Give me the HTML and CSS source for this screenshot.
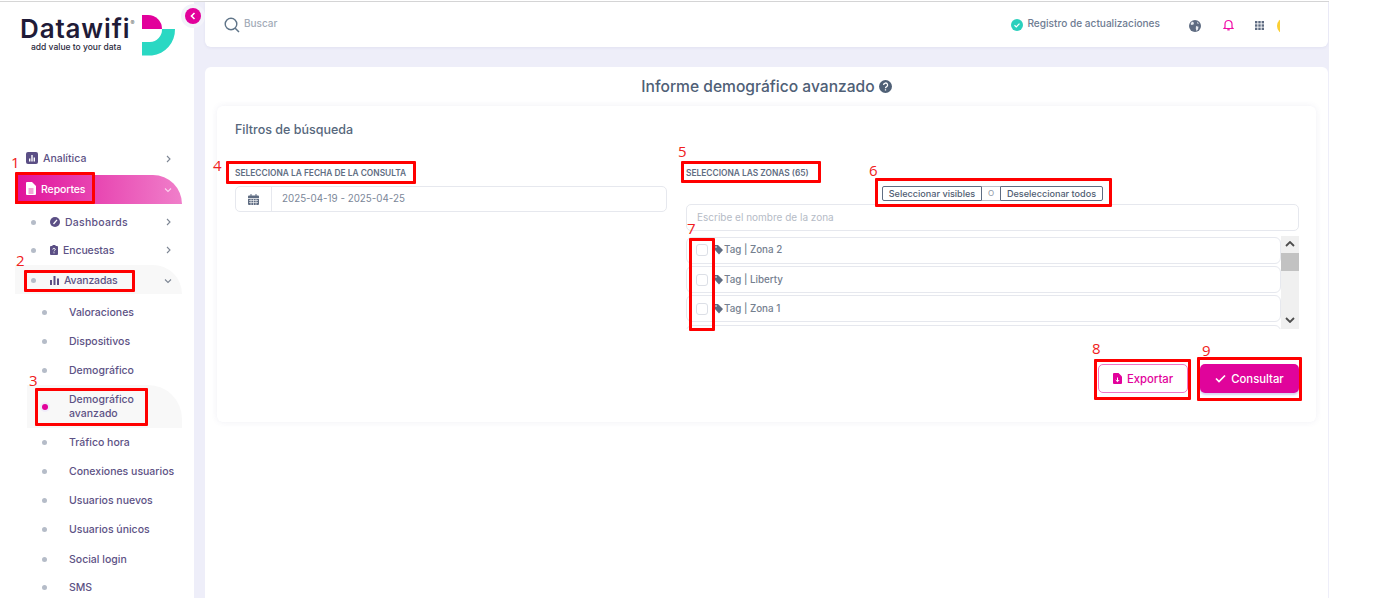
FILE: index.html
```html
<!DOCTYPE html>
<html lang="es">
<head>
<meta charset="utf-8">
<title>Informe demográfico avanzado</title>
<link rel="stylesheet" href="styles.css">
</head>
<body>
<div class="app">
  <aside class="sidebar">
    <div class="logo">
      <div class="logo-text">
        <div class="logo-name">Datawifi<sup class="logo-reg">®</sup></div>
        <div class="logo-tag">add value to your data</div>
      </div>
      <svg class="logo-mark" width="34" height="41" viewBox="0 0 34 41">
        <path d="M0 0h6a14 14 0 0 1 14 14H0z" fill="#e2019b"/>
        <path d="M20 14h13a26 26 0 0 1-23 26.500H0V27h8a12.500 12.500 0 0 0 12-13z" fill="#2ad8c3"/>
      </svg>
    </div>
    <nav class="nav">
      <a class="row l1 r-analitica">
        <svg class="ic ic-up" width="12" height="12" viewBox="0 0 12 12"><rect width="12" height="12" rx="2" fill="#5b4f85"/><path d="M3.700 9.500V6.500M6 9.500V3M8.300 9.500V5.500" stroke="#fff" stroke-width="1.400"/></svg>
        <span class="txt">Analítica</span>
        <svg class="chev" width="6" height="8" viewBox="0 0 6 8"><path d="M1 1l3 3-3 3" fill="none" stroke="#7d8694" stroke-width="1.100"/></svg>
      </a>
      <a class="row l1 r-reportes">
        <svg class="ic ic-up" width="10" height="13" viewBox="0 0 10 13"><path d="M1 0h5l4 4v8a1 1 0 0 1-1 1H1a1 1 0 0 1-1-1V1a1 1 0 0 1 1-1z" fill="#fff"/><path d="M2.500 7h5M2.500 9h5M2.500 11h5" stroke="#e64fb2"/></svg>
        <span class="txt">Reportes</span>
        <svg class="chev" width="8" height="6" viewBox="0 0 8 6"><path d="M1 1.500l3 3 3-3" fill="none" stroke="#fbd5ee" stroke-width="1.100"/></svg>
      </a>
      <a class="row l2 r-dash">
        <i class="dot"></i>
        <svg class="ic2" width="10" height="10" viewBox="0 0 10 10"><circle cx="5" cy="5" r="5" fill="#5b4f85"/><path d="M3.500 7L7 2.800" stroke="#fff" stroke-width="1.300"/></svg>
        <span class="txt">Dashboards</span>
        <svg class="chev" width="6" height="8" viewBox="0 0 6 8"><path d="M1 1l3 3-3 3" fill="none" stroke="#7d8694" stroke-width="1.100"/></svg>
      </a>
      <a class="row l2 r-enc">
        <i class="dot"></i>
        <svg class="ic2 ic-narrow" width="8" height="10" viewBox="0 0 8 10"><path d="M1 1h1.500V0h3v1H7a1 1 0 0 1 1 1v7a1 1 0 0 1-1 1H1a1 1 0 0 1-1-1V2a1 1 0 0 1 1-1z" fill="#5b4f85"/><path d="M2.800 4.500a1.200 1.200 0 1 1 1.700 1.100L4 6.300M4 7.300v1" stroke="#fff" fill="none"/></svg>
        <span class="txt">Encuestas</span>
        <svg class="chev" width="6" height="8" viewBox="0 0 6 8"><path d="M1 1l3 3-3 3" fill="none" stroke="#7d8694" stroke-width="1.100"/></svg>
      </a>
      <a class="row l2 r-ava">
        <i class="dot"></i>
        <svg class="ic2" width="9" height="9" viewBox="0 0 9 9"><path d="M0 4h2v5H0zM3.500 0h2v9h-2zM7 2.500h2V9H7z" fill="#5b4f85"/></svg>
        <span class="txt">Avanzadas</span>
        <svg class="chev" width="8" height="6" viewBox="0 0 8 6"><path d="M1 1.500l3 3 3-3" fill="none" stroke="#7d8694" stroke-width="1.100"/></svg>
      </a>
      <a class="row l3"><i class="dot"></i><span class="txt">Valoraciones</span></a>
      <a class="row l3"><i class="dot"></i><span class="txt">Dispositivos</span></a>
      <a class="row l3"><i class="dot"></i><span class="txt">Demográfico</span></a>
      <a class="row l3 r-active"><i class="dot dot-on"></i><span class="txt">Demográfico avanzado</span></a>
      <a class="row l3"><i class="dot"></i><span class="txt">Tráfico hora</span></a>
      <a class="row l3"><i class="dot"></i><span class="txt">Conexiones usuarios</span></a>
      <a class="row l3"><i class="dot"></i><span class="txt">Usuarios nuevos</span></a>
      <a class="row l3"><i class="dot"></i><span class="txt">Usuarios únicos</span></a>
      <a class="row l3 r-social"><i class="dot"></i><span class="txt">Social login</span></a>
      <a class="row l3"><i class="dot"></i><span class="txt">SMS</span></a>
    </nav>
  </aside>

  <div class="content">
    <header class="topbar">
      <svg width="16" height="16" viewBox="0 0 16 16"><circle cx="7" cy="7" r="5.800" fill="none" stroke="#5f7488" stroke-width="1.400"/><path d="M11.200 11.200L15 15" stroke="#5f7488" stroke-width="1.500"/></svg>
      <span class="search">Buscar</span>
      <svg class="tick" width="12" height="12" viewBox="0 0 12 12"><circle cx="6" cy="6" r="6" fill="#2ad0bd"/><path d="M3.500 6.200l1.800 1.700 3.200-3.300" fill="none" stroke="#fff" stroke-width="1.200"/></svg>
      <span class="updates">Registro de actualizaciones</span>
      <svg class="globe" width="12" height="12" viewBox="0 0 12 12"><circle cx="6" cy="6" r="6" fill="#5f6c82"/><path d="M3 1.500l2 1.200-.5 1.800-2 .5-1-1zM7 6l2.500.7L9 9.500 7.500 11 6.800 8.500zM8 1.500l2 2-1.500.3z" fill="#e8ebf0"/></svg>
      <svg class="bell" width="11" height="12" viewBox="0 0 11 12"><path d="M2 8.500V5a3.500 3.500 0 0 1 7 0v3.500l1 1H1z" fill="none" stroke="#f010a8" stroke-width="1.200"/><path d="M4.300 10.800h2.400" stroke="#f010a8" stroke-width="1.300"/></svg>
      <svg class="apps" width="9" height="9" viewBox="0 0 9 9" fill="#5f6c82"><rect width="2.400" height="2.400"/><rect x="3.300" width="2.400" height="2.400"/><rect x="6.600" width="2.400" height="2.400"/><rect y="3.300" width="2.400" height="2.400"/><rect x="3.300" y="3.300" width="2.400" height="2.400"/><rect x="6.600" y="3.300" width="2.400" height="2.400"/><rect y="6.600" width="2.400" height="2.400"/><rect x="3.300" y="6.600" width="2.400" height="2.400"/><rect x="6.600" y="6.600" width="2.400" height="2.400"/></svg>
      <span class="avatar-clip"><i class="avatar"></i></span>
    </header>

    <main class="page">
      <h1 class="page-title">Informe demográfico avanzado
        <svg class="help" width="13" height="13" viewBox="0 0 13 13"><circle cx="6.500" cy="6.500" r="6.500" fill="#4f6076"/><path d="M4.600 5a2 2 0 1 1 2.900 1.800c-.7.400-1 .7-1 1.400M6.500 9.300v1.300" fill="none" stroke="#fff" stroke-width="1.300"/></svg>
      </h1>
      <section class="card">
        <h2 class="card-title">Filtros de búsqueda</h2>
        <div class="cols">
          <div class="col-date">
            <label class="lbl">SELECCIONA LA FECHA DE LA CONSULTA</label>
            <div class="date">
              <span class="date-ic"><svg width="11" height="11" viewBox="0 0 11 11"><path d="M1 1.500h1.500V0h1v1.500h4V0h1v1.500H10a1 1 0 0 1 1 1V4H0V2.500a1 1 0 0 1 1-1zM0 4.700h11V10a1 1 0 0 1-1 1H1a1 1 0 0 1-1-1z" fill="#5f6c82"/><path d="M1 6.500h9M1 8.500h9M3 5v6M5.500 5v6M8 5v6" stroke="#fff" stroke-width=".6"/></svg></span>
              <span class="date-val">2025-04-19 - 2025-04-25</span>
            </div>
          </div>
          <div class="col-zones">
            <label class="lbl">SELECCIONA LAS ZONAS (65)</label>
            <div class="seg">
              <button class="seg-btn seg-a">Seleccionar visibles</button>
              <span class="seg-o">O</span>
              <button class="seg-btn seg-b">Deseleccionar todos</button>
            </div>
            <div class="zone-search">Escribe el nombre de la zona</div>
            <div class="list">
              <div class="items">
                <div class="item"><i class="cb"></i><svg class="tag" width="10" height="10" viewBox="0 0 10 10"><path d="M0 0h4l5 5-4 4.500L0 4z" fill="#5f6c82"/><circle cx="2" cy="2" r=".8" fill="#fff"/></svg><span>Tag | Zona 2</span></div>
                <div class="item"><i class="cb"></i><svg class="tag" width="10" height="10" viewBox="0 0 10 10"><path d="M0 0h4l5 5-4 4.500L0 4z" fill="#5f6c82"/><circle cx="2" cy="2" r=".8" fill="#fff"/></svg><span>Tag | Liberty</span></div>
                <div class="item"><i class="cb"></i><svg class="tag" width="10" height="10" viewBox="0 0 10 10"><path d="M0 0h4l5 5-4 4.500L0 4z" fill="#5f6c82"/><circle cx="2" cy="2" r=".8" fill="#fff"/></svg><span>Tag | Zona 1</span></div>
                <div class="item"></div>
              </div>
              <div class="scroll">
                <svg width="10" height="6" viewBox="0 0 10 6"><path d="M1 5l4-4 4 4" fill="none" stroke="#4d4d4d" stroke-width="1.800"/></svg>
                <i class="thumb"></i>
                <svg class="sc-down" width="10" height="6" viewBox="0 0 10 6"><path d="M1 1l4 4 4-4" fill="none" stroke="#4d4d4d" stroke-width="1.800"/></svg>
              </div>
            </div>
            <div class="actions">
              <button class="btn btn-out"><svg width="9" height="11" viewBox="0 0 9 11"><path d="M1 0h4.500L9 3.500V10a1 1 0 0 1-1 1H1a1 1 0 0 1-1-1V1a1 1 0 0 1 1-1z" fill="#e2019b"/><path d="M4.500 4.500v4M2.800 7l1.700 1.700L6.200 7" fill="none" stroke="#fff"/></svg>Exportar</button>
              <button class="btn btn-fill"><svg width="11" height="9" viewBox="0 0 11 9"><path d="M1 4.500l3 3 6-6" fill="none" stroke="#fff" stroke-width="1.700"/></svg>Consultar</button>
            </div>
          </div>
        </div>
      </section>
    </main>
  </div>

  <span class="collapse"><svg width="6" height="8" viewBox="0 0 6 8"><path d="M4.500 1L1.500 4l3 3" fill="none" stroke="#fff" stroke-width="1.600"/></svg></span>

  <i class="mark m1"></i><b class="num n1">1</b>
  <i class="mark m2"></i><b class="num n2">2</b>
  <i class="mark m3"></i><b class="num n3">3</b>
  <i class="mark m4"></i><b class="num n4">4</b>
  <i class="mark m5"></i><b class="num n5">5</b>
  <i class="mark m6"></i><b class="num n6">6</b>
  <i class="mark m7"></i><b class="num n7">7</b>
  <i class="mark m8"></i><b class="num n8">8</b>
  <i class="mark m9"></i><b class="num n9">9</b>
</div>
</body>
</html>
```
FILE: styles.css
```css
* { box-sizing: border-box; }
html, body { margin: 0; padding: 0; background: #fff; height: 598px; overflow: hidden; }
body { font-family: Inter, "Open Sans", sans-serif; color: #5e6b80; }
i { display: block; }

.app { position: relative; display: flex; width: 1329px; height: 598px; overflow: hidden; background: #eeeef9; border-top: 1px solid #fff; box-shadow: inset 0 1px 0 #d6d6d6; }

/* sidebar */
.sidebar { flex: 0 0 194px; margin-top: 1px; background: #fff; padding: 0 12px 0 15px; }
.logo { position: relative; height: 142px; display: flex; align-items: flex-start; padding: 13px 0 0 5px; gap: 3px; }
.logo-name { font-size: 26px; font-weight: 600; line-height: 27px; color: #1f1b38; letter-spacing: .85px; }
.logo-reg { font-size: 6px; font-weight: 400; color: #666; vertical-align: 13px; line-height: 0; letter-spacing: 0; }
.logo-tag { font-size: 8.500px; font-weight: 500; line-height: 11px; color: #2b2a40; margin: 0 0 0 11px; }
.logo-mark { flex: none; margin-top: 0; position: absolute; left: 127px; top: 13px; }

.nav { display: flex; flex-direction: column; }
.row { display: flex; align-items: center; height: 29px; font-size: 10.500px; font-weight: 500; color: #5d5285; white-space: nowrap; }
.dot { width: 5px; height: 5px; border-radius: 50%; background: #b5bcc8; flex: none; }
.chev { flex: none; margin-left: auto; }
.ic-up { position: relative; top: -1px; }

.l1 { padding: 0 10px 0 11px; }
.l1 .txt { margin-left: 5px; }
.r-analitica { margin-bottom: 2px; }
.r-reportes { color: #fff; background: linear-gradient(90deg, #e0119b 0%, #f07fca 100%); border-radius: 0 32px 0 0; margin-bottom: 4px; padding-right: 10px; }
.r-reportes .txt { margin-left: 5px; letter-spacing: -.1px; }

.l2 { padding: 0 10px 0 16px; }
.l2 .ic2 { margin-left: 14px; flex: none; }
.l2 .txt { margin-left: 5px; }
.l2 .ic-narrow { margin-left: 14px; }
.r-dash { height: 28px; }
.r-dash .txt { letter-spacing: .25px; }
.r-enc { height: 29px; padding-bottom: 1px; }
.r-enc .txt { letter-spacing: -.1px; }
.r-ava { background: #f8f8f8; border-radius: 0 32px 0 0; margin-bottom: 4px; padding-top: 2px; padding-right: 10px; }
.r-ava .txt { letter-spacing: -.15px; }

.l3 { padding: 0 0 0 27px; }
.l3 .txt { margin-left: 22px; line-height: 14px; }
.r-active { height: 43px; margin-left: 12px; padding-left: 15px; background: #f8f8f8; border-radius: 0 34px 0 0; white-space: normal; }
.r-active .txt { width: 70px; margin-left: 23px; }
.dot-on { width: 6px; height: 6px; background: #e2019b; box-shadow: 0 0 0 2px #f0ecfa; margin-right: -2px; }
.r-social { padding-top: 2px; }

/* content */
.content { flex: 1; min-width: 0; display: flex; flex-direction: column; padding: 1px 0 0 11px; }
.topbar { height: 45px; flex: none; background: #fff; border-radius: 0 0 6px 6px; display: flex; align-items: center; padding: 0 48px 0 19px; box-shadow: 0 1px 3px rgba(90,90,150,.08); margin-right: 1px; }
.search { margin-left: 4px; font-size: 10px; font-weight: 500; color: #a3abb8; position: relative; top: -2px; }
.tick { margin-left: auto; }
.updates { margin-left: 4px; font-size: 10.100px; font-weight: 500; color: #6e7c92; position: relative; top: -2px; }
.globe { margin-left: 29px; position: relative; top: 1px; }
.bell { margin-left: 22px; }
.apps { margin-left: 21px; position: relative; top: 1px; }
.avatar-clip { margin-left: 13px; width: 3px; height: 16px; overflow: hidden; flex: none; position: relative; top: 1px; }
.avatar { width: 16px; height: 16px; border-radius: 50%; background: #fbcf33; }

.page { flex: 1; margin: 20px 1px 0 0; background: #fff; border-radius: 6px 6px 0 0; padding: 0 12px; min-height: 0; }
.page-title { margin: 0; height: 39px; display: flex; align-items: center; justify-content: center; gap: 4px; font-size: 15.600px; font-weight: 500; color: #4f6076; }

.card { height: 316px; border-radius: 6px; background: #fff; box-shadow: 0 0 6px rgba(80,80,140,.09); padding: 15px 17px 0 18px; }
.card-title { margin: 0; height: 18px; font-size: 12.500px; line-height: 18px; font-weight: 500; color: #56677c; }
.cols { display: flex; gap: 19px; margin-top: 26px; }
.col-date { flex: 0 0 432px; }
.col-zones { flex: 1; min-width: 0; display: flex; flex-direction: column; }
.lbl { display: block; height: 14px; padding-top: 1px; font-size: 8.400px; line-height: 14px; font-weight: 600; color: #5f6d82; }

.date { margin-top: 7px; display: flex; height: 26px; border: 1px solid #e6e8ee; border-radius: 5px; align-items: stretch; }
.date-ic { width: 36px; display: flex; align-items: center; justify-content: center; border-right: 1px solid #e6e8ee; }
.date-val { align-self: center; margin-left: 10px; font-size: 9.800px; line-height: 12px; color: #7c8799; }

.seg { margin-top: 7px; height: 15px; display: flex; justify-content: center; }
.seg-btn { height: 15px; padding: 0; background: #fff; border: 1px solid #5f6d82; font: 500 9.100px Inter, sans-serif; color: #4f5d72; }
.seg-a { width: 100px; border-radius: 2px 0 0 2px; }
.seg-b { width: 103px; border-radius: 0 2px 2px 0; }
.seg-o { width: 18px; font-size: 8px; line-height: 13px; text-align: center; color: #8d97a6; border-top: 1px solid #b8bec8; border-bottom: 1px solid #b8bec8; }

.zone-search { margin-top: 3px; height: 27px; border: 1px solid #e6e8ee; border-radius: 5px; padding-left: 10px; font-size: 10px; line-height: 25px; color: #b5bbc6; }

.list { margin-top: 5px; height: 93px; display: flex; overflow: hidden; }
.items { flex: 1; min-width: 0; padding-top: 1px; display: flex; flex-direction: column; gap: 2.500px; }
.item { flex: none; height: 26.700px; border: 1px solid #e6e8ee; border-radius: 6px; display: flex; align-items: center; padding-left: 9px; font-size: 9.800px; line-height: 12px; font-weight: 500; color: #75808f; }
.cb { width: 12px; height: 12px; border: 1px solid #dcdfe6; border-radius: 3px; margin-right: 6px; flex: none; }
.tag { flex: none; }
.scroll { flex: 0 0 18px; background: #f0f0f0; display: flex; flex-direction: column; align-items: center; padding-top: 5px; }
.thumb { width: 18px; height: 18px; background: #c2c2c2; margin-top: 6px; }
.sc-down { margin-top: auto; margin-bottom: 6px; }

.actions { margin-top: 35px; display: flex; justify-content: flex-end; gap: 12px; }
.btn { height: 29px; display: flex; align-items: center; justify-content: center; gap: 5px; border-radius: 5px; font: 500 11.300px Inter, sans-serif; padding: 0; }
.btn-out { width: 90px; background: #fff; border: 1px solid #f076c6; color: #e2019b; }
.btn-fill { width: 99px; background: #e0049b; border: 0; color: #fff; box-shadow: 0 2px 2px #d9d4f2; }

/* overlays */
.collapse { position: absolute; left: 185px; top: 7px; width: 16px; height: 16px; border-radius: 50%; background: #e2019b; box-shadow: 0 0 0 4px #f3f3fa; display: flex; align-items: center; justify-content: center; }
.mark { position: absolute; border: 3px solid #f00; border-radius: 1px; }
.num { position: absolute; font: 400 15px/18px "Open Sans", sans-serif; color: #f02020; }
.m1 { left: 15px; top: 171px; width: 80px; height: 32px; }
.m2 { left: 24px; top: 269px; width: 111px; height: 22px; }
.m3 { left: 35px; top: 387px; width: 113px; height: 38px; }
.m4 { left: 226px; top: 160px; width: 190px; height: 23px; }
.m5 { left: 681px; top: 160px; width: 140px; height: 22px; }
.m6 { left: 875px; top: 177px; width: 237px; height: 29px; }
.m7 { left: 689px; top: 237px; width: 26px; height: 93px; }
.m8 { left: 1094px; top: 358px; width: 97px; height: 41px; }
.m9 { left: 1197px; top: 356px; width: 105px; height: 44px; }
.n1 { left: 11px; top: 152px; }
.n2 { left: 16px; top: 250px; }
.n3 { left: 29px; top: 370px; }
.n4 { left: 213px; top: 155px; }
.n5 { left: 678px; top: 141px; }
.n6 { left: 869px; top: 160px; }
.n7 { left: 687px; top: 218px; }
.n8 { left: 1092px; top: 338px; }
.n9 { left: 1202px; top: 340px; }
```
